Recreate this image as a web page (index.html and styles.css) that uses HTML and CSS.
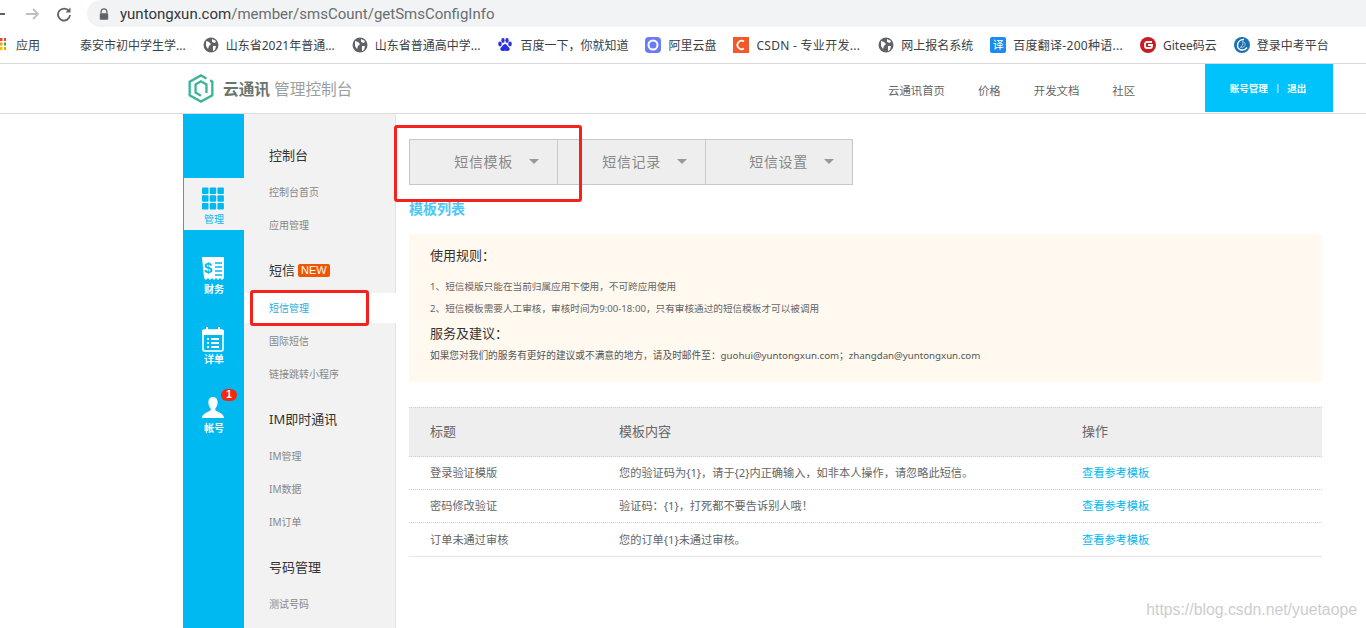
FILE: index.html
```html
<!DOCTYPE html>
<html lang="zh">
<head>
<meta charset="utf-8">
<title>云通讯 管理控制台</title>
<link rel="stylesheet" href="styles.css">
</head>
<body>
<div class="chrome">
  <div class="toolbar">
    <svg class="nav-icon back" viewBox="0 0 16 16"><path d="M14 8H2M7 3L2 8l5 5" fill="none" stroke="#5f6368" stroke-width="1.8"/></svg>
    <svg class="nav-icon fwd" viewBox="0 0 16 16"><path d="M2 8h12M9 3l5 5-5 5" fill="none" stroke="#bdc1c6" stroke-width="1.8"/></svg>
    <svg class="nav-icon reload" viewBox="0 0 16 16"><path d="M13 5.2A6 6 0 1 0 14 9" fill="none" stroke="#5f6368" stroke-width="1.8"/><path d="M14.5 1.5v5h-5z" fill="#5f6368"/></svg>
    <div class="omnibox">
      <svg class="lock" viewBox="0 0 12 14"><path d="M2.5 6V4.2a3.5 3.5 0 0 1 7 0V6" fill="none" stroke="#5f6368" stroke-width="1.5"/><rect x="1" y="6" width="10" height="8" rx="1" fill="#5f6368"/></svg>
      <span class="url"><span class="host">yuntongxun.com</span>/member/smsCount/getSmsConfigInfo</span>
    </div>
  </div>
  <div class="bookmarks">
    <div class="bm apps"><svg class="fav" viewBox="0 0 16 16"><rect x="10" y="1" width="2.500" height="3" fill="#ea4335"/><rect x="14" y="1" width="2.500" height="3" fill="#ea4335"/><rect x="10" y="5.500" width="2.500" height="3" fill="#f4a100"/><rect x="14" y="5.500" width="2.500" height="3" fill="#34a853"/><rect x="10" y="10" width="2.500" height="3" fill="#fbbc05"/><rect x="14" y="10" width="2.500" height="3" fill="#f4a100"/></svg><span>应用</span></div>
    <div class="bm first"><span>泰安市初中学生学...</span></div>
    <div class="bm"><svg class="fav" viewBox="0 0 16 16"><circle cx="8" cy="8" r="7.5" fill="#5f6368"/><path d="M3 4l3 1 2 2-2 2-1 3-2-3zM9 2l4 2-1 2-3-1zM10 9l3 0-1 4-2 1z" fill="#fff"/></svg><span>山东省2021年普通...</span></div>
    <div class="bm"><svg class="fav" viewBox="0 0 16 16"><circle cx="8" cy="8" r="7.5" fill="#5f6368"/><path d="M3 4l3 1 2 2-2 2-1 3-2-3zM9 2l4 2-1 2-3-1zM10 9l3 0-1 4-2 1z" fill="#fff"/></svg><span>山东省普通高中学...</span></div>
    <div class="bm"><svg class="fav" viewBox="0 0 16 16" fill="#2932e1"><ellipse cx="3" cy="7" rx="1.8" ry="2.4"/><ellipse cx="6" cy="3.5" rx="1.7" ry="2.4"/><ellipse cx="10" cy="3.5" rx="1.7" ry="2.4"/><ellipse cx="13" cy="7" rx="1.8" ry="2.4"/><path d="M8 7c-2 0-2.500 2.500-4 3.500-1.500 1.500-.5 4 2 3.500 1 0 3-.5 4 0 2.500.5 3.500-2 2-3.500C10.500 9.500 10 7 8 7z"/></svg><span>百度一下，你就知道</span></div>
    <div class="bm"><svg class="fav" viewBox="0 0 16 16"><rect width="16" height="16" rx="4" fill="#6a7bf5"/><circle cx="8" cy="8" r="4.500" fill="none" stroke="#fff" stroke-width="2"/></svg><span>阿里云盘</span></div>
    <div class="bm bm-csdn"><svg class="fav" viewBox="0 0 16 16"><rect width="16" height="16" fill="#f1592a"/><path d="M11 4.500A4.200 4.200 0 1 0 11 11.500" fill="none" stroke="#fff" stroke-width="1.800"/></svg><span class="wide">CSDN - 专业开发...</span></div>
    <div class="bm"><svg class="fav" viewBox="0 0 16 16"><circle cx="8" cy="8" r="7.5" fill="#5f6368"/><path d="M3 4l3 1 2 2-2 2-1 3-2-3zM9 2l4 2-1 2-3-1zM10 9l3 0-1 4-2 1z" fill="#fff"/></svg><span>网上报名系统</span></div>
    <div class="bm"><span class="fav fav-yi">译</span><span class="wide">百度翻译-200种语...</span></div>
    <div class="bm"><svg class="fav" viewBox="0 0 16 16"><circle cx="8" cy="8" r="8" fill="#c71d23"/><path d="M12 5H7a2 2 0 0 0-2 2v2a2 2 0 0 0 2 2h3a2 2 0 0 0 2-2V8H8" fill="none" stroke="#fff" stroke-width="1.800"/></svg><span>Gitee码云</span></div>
    <div class="bm"><svg class="fav" viewBox="0 0 16 16"><circle cx="8" cy="8" r="8" fill="#1a6fb0"/><path d="M10 2.500C6 2.500 3.500 5 3.500 8.500c0 2.500 2 4.500 5 4.500 2 0 3.500-1 4.500-2.500" fill="none" stroke="#fff" stroke-width="1.400"/><path d="M8.500 4.500c2.500.5 3.300 2.700 2.200 4.300-1 1.500-2.700 1.800-4.400 1.500 2-1 3.200-3 2.200-5.800z" fill="#1a6fb0" stroke="#fff" stroke-width=".6"/></svg><span>登录中考平台</span></div>
  </div>
</div>

<header class="site-head">
  <div class="brand">
    <svg class="logo" viewBox="0 0 28 32"><path d="M20 5 14 1.500 1.500 8.500v15L14 30.500l12.500-7v-15L24 7" fill="none" stroke="#3fb39b" stroke-width="2.600"/><path d="M14 24 8 20.500v-9L14 8l6 3.500V21" fill="none" stroke="#3fb39b" stroke-width="2.600"/></svg>
    <span class="brand-main">云通讯</span><span class="brand-sub">管理控制台</span>
  </div>
  <nav class="top-nav">
    <a>云通讯首页</a><a>价格</a><a>开发文档</a><a>社区</a>
  </nav>
  <div class="account"><span>账号管理</span><span class="sep">|</span><span>退出</span></div>
</header>

<main class="layout">
  <aside class="rail">
    <div class="rail-item active">
      <svg class="rail-icon" viewBox="0 0 22 22" fill="#00b9f1"><rect width="6.500" height="6.500" rx="1"/><rect x="7.700" width="6.500" height="6.500" rx="1"/><rect x="15.400" width="6.500" height="6.500" rx="1"/><rect y="7.700" width="6.500" height="6.500" rx="1"/><rect x="7.700" y="7.700" width="6.500" height="6.500" rx="1"/><rect x="15.400" y="7.700" width="6.500" height="6.500" rx="1"/><rect y="15.400" width="6.500" height="6.500" rx="1"/><rect x="7.700" y="15.400" width="6.500" height="6.500" rx="1"/><rect x="15.400" y="15.400" width="6.500" height="6.500" rx="1"/></svg>
      <span>管理</span>
    </div>
    <div class="rail-item">
      <svg class="rail-icon" viewBox="0 0 22 23"><path d="M0 0h22v21l-2 2-2-2-2 2-2-2-2 2-2-2-2 2-2-2-2 2-2-2z" fill="#fff"/><path d="M13 6h7M13 10h7M13 14h7M13 18h7" stroke="#00b9f1" stroke-width="1.500"/><text x="2" y="16" class="dollar">$</text></svg>
      <span>财务</span>
    </div>
    <div class="rail-item bill">
      <svg class="rail-icon tall" viewBox="0 0 22 25"><rect x="1" y="3" width="20" height="21" rx="2" fill="none" stroke="#cfeffb" stroke-width="2"/><rect y="3" width="22" height="5" fill="#fff"/><rect x="4" y="0" width="2" height="4" fill="#fff"/><rect x="16" y="0" width="2" height="4" fill="#fff"/><path d="M5 12h2M9 12h8M5 16h2M9 16h8M5 20h2M9 20h8" stroke="#fff" stroke-width="2"/></svg>
      <span>详单</span>
    </div>
    <div class="rail-item">
      <svg class="rail-icon" viewBox="0 0 24 23" fill="#fff"><path d="M12 0c3.500 0 5 2.500 5 6 0 3-1 5-2.500 6.500v2C17 16.500 24 18 24 23H0c0-5 7-6.500 9.500-8.500v-2C8 11 7 9 7 6c0-3.500 1.500-6 5-6z"/></svg>
      <span>帐号</span>
      <b class="badge">1</b>
    </div>
  </aside>

  <nav class="side-menu">
    <h3>控制台</h3>
    <a>控制台首页</a>
    <a>应用管理</a>
    <h3>短信<em class="new">NEW</em></h3>
    <a class="current">短信管理</a>
    <a>国际短信</a>
    <a>链接跳转小程序</a>
    <h3>IM即时通讯</h3>
    <a>IM管理</a>
    <a>IM数据</a>
    <a>IM订单</a>
    <h3>号码管理</h3>
    <a>测试号码</a>
  </nav>

  <section class="content">
    <div class="tabs">
      <div class="tab"><span>短信模板</span><i class="caret"></i></div>
      <div class="tab"><span>短信记录</span><i class="caret"></i></div>
      <div class="tab"><span>短信设置</span><i class="caret"></i></div>
    </div>
    <h2 class="list-title">模板列表</h2>
    <div class="notice">
      <h4>使用规则：</h4>
      <p class="rule first-rule">1、短信模版只能在当前归属应用下使用，不可跨应用使用</p>
      <p class="rule">2、短信模板需要人工审核，审核时间为9:00-18:00，只有审核通过的短信模板才可以被调用</p>
      <h4 class="second">服务及建议：</h4>
      <p class="rule mail">如果您对我们的服务有更好的建议或不满意的地方，请及时邮件至：guohui@yuntongxun.com；zhangdan@yuntongxun.com</p>
    </div>
    <div class="table">
      <div class="row head"><span>标题</span><span>模板内容</span><span>操作</span></div>
      <div class="row"><span>登录验证模版</span><span>您的验证码为{1}，请于{2}内正确输入，如非本人操作，请忽略此短信。</span><a>查看参考模板</a></div>
      <div class="row"><span>密码修改验证</span><span>验证码：{1}，打死都不要告诉别人哦！</span><a>查看参考模板</a></div>
      <div class="row last"><span>订单未通过审核</span><span>您的订单{1}未通过审核。</span><a>查看参考模板</a></div>
    </div>
  </section>
</main>

<div class="mark mark-tab"></div>
<div class="mark mark-menu"></div>
<div class="watermark">https://blog.csdn.net/yuetaope</div>
</body>
</html>
```

FILE: styles.css
```css
* { box-sizing: border-box; }
html, body { margin: 0; height: 628px; overflow: hidden; background: #fff; }
body { font-family: "Noto Sans", "Noto Sans CJK SC", sans-serif; color: #666; position: relative; }
h2, h3, h4, p { margin: 0; font-weight: normal; }

.chrome { height: 64px; border-bottom: 1px solid #d9d9d9; }
.toolbar { height: 27px; display: flex; align-items: center; }
.nav-icon { width: 16px; height: 16px; flex: none; }
.back { margin-left: -9px; }
.fwd { margin-left: 17px; }
.reload { margin-left: 16px; }
.omnibox { margin-left: 15px; flex: 1; height: 27px; background: #f1f3f4; border-radius: 14px 0 0 14px; display: flex; align-items: center; padding-left: 12px; }
.lock { width: 10px; height: 12px; flex: none; }
.url { margin-left: 11px; font: 15px "Roboto", "Liberation Sans", sans-serif; color: #6a6d70; }
.host { color: #33363a; }
.bookmarks { height: 36px; display: flex; align-items: center; font: 12px "Noto Sans", "Noto Sans CJK SC", sans-serif; color: #3c4043; white-space: nowrap; }
.bm { display: flex; align-items: center; gap: 7px; margin-right: 17px; }
.bm:last-child { margin-right: 0; }
.apps { margin-left: -10px; margin-right: 40px; gap: 10px; }
.bm-csdn { margin-right: 18px; }
.wide { letter-spacing: 0.280px; }
.fav { width: 16px; height: 16px; flex: none; }
.fav-yi { background: #1a8cf0; color: #fff; font-size: 11px; line-height: 16px; text-align: center; border-radius: 2px; }

.site-head { height: 50px; position: relative; display: flex; align-items: center; border-bottom: 1px solid #dcdcdc; padding-left: 188px; }
.brand { display: flex; align-items: center; width: 700px; }
.logo { width: 26px; height: 29px; margin-right: 9px; }
.brand-main { font-weight: 700; font-size: 15.700px; color: #6b7570; }
.brand-sub { font-size: 15.700px; color: #9a9fa0; margin-left: 4px; }
.top-nav { display: flex; gap: 33px; font-size: 11.400px; color: #666; padding-top: 2px; }
.top-nav a { display: block; }
.account { position: absolute; left: 1205px; top: 0; width: 128px; height: 48px; background: #00c3fb; color: #fff; font-weight: 700; font-size: 9.500px; display: flex; align-items: center; justify-content: center; padding: 0 2px 1px 0; }
.sep { margin: 0 7px; font-weight: 400; }

.layout { display: flex; height: 514px; margin-left: 183px; }
.rail { width: 61px; background: #00b9f1; padding-top: 64px; flex: none; }
.rail-item { height: 52px; margin-left: 1px; margin-bottom: 18px; padding: 9px 2px 0 0; display: flex; flex-direction: column; align-items: center; color: #fff; font-weight: 700; font-size: 10px; line-height: 12px; position: relative; }
.rail-item span { margin-left: 2px; }
.rail-item.active { background: #f2f2f2; color: #00b9f1; font-weight: 400; }
.rail-item.bill { margin-bottom: 17px; }
.rail-icon { width: 22px; height: 23px; margin-bottom: 3px; }
.rail-icon.tall { height: 25px; margin-bottom: 1px; }
.dollar { font: 700 15px "Liberation Sans", sans-serif; fill: #00b9f1; }
.badge { position: absolute; left: 37px; top: 2px; width: 16px; height: 12px; border-radius: 6px; background: #f4280f; color: #fff; font: 700 10px/12px "Liberation Sans", sans-serif; text-align: center; }

.side-menu { width: 152px; background: #f2f2f2; border-right: 1px solid #e3e3e3; flex: none; padding-top: 33px; }
.side-menu h3 { font-size: 13px; line-height: 17px; color: #333; padding-left: 25px; margin-bottom: 22px; display: flex; align-items: center; }
.side-menu a { display: block; font-size: 10px; line-height: 13px; color: #888; padding-left: 25px; margin-bottom: 20px; }
.side-menu a + h3 { margin-top: 30px; }
.new { margin-left: 3px; font: normal 11px/13px "Liberation Sans", sans-serif; background: #f25500; color: #fff; padding: 0 3px; border-radius: 2px; }
.side-menu a.current { background: #fff; color: #2aaee0; height: 30px; line-height: 30px; margin: -8px -1px 12px 0; }

.content { flex: 1; padding: 25px 44px 0 13px; }
.tabs { display: grid; grid-template-columns: 147px 148px 147px; width: 444px; height: 46px; background: #eee; border: 1px solid #c8c8c8; }
.tab { display: flex; align-items: center; justify-content: flex-end; gap: 16px; padding: 0 18px 2px 0; font-size: 14px; color: #888; letter-spacing: 0.700px; }
.tab + .tab { border-left: 1px solid #c8c8c8; }
.caret { border: 5px solid transparent; border-top: 5px solid #999; border-bottom: 0; width: 0; height: 0; }
.list-title { font-weight: 700; font-size: 14px; line-height: 18px; color: #4cc8f7; margin-top: 15px; }
.notice { margin-top: 16px; height: 148px; background: #fff9f0; padding: 11px 21px; color: #666; }
.notice h4 { font-size: 13px; line-height: 20px; color: #333; }
.notice .second { margin-top: 8px; }
.rule { font-size: 9.650px; line-height: 13px; margin-top: 9px; }
.first-rule { margin-top: 15px; }
.rule.mail { margin-top: 6px; color: #555; font-size: 9.700px; }
.table { margin-top: 25px; font-size: 11.200px; color: #666; }
.row { display: grid; grid-template-columns: 189px 463px 1fr; align-items: center; height: 33px; padding: 0 0 2px 21px; border-bottom: 1px dotted #ccc; }
.row.head { height: 50px; padding-bottom: 4px; background: #eee; border-top: 1px dotted #ccc; font-size: 13px; }
.row.last { height: 34px; border-bottom: 1px solid #e6e6e6; }
.row a { color: #00b9f1; }

.mark { position: absolute; border: 3px solid #f5221b; border-radius: 3px; }
.mark-tab { left: 394px; top: 125px; width: 188px; height: 77px; }
.mark-menu { left: 250px; top: 290px; width: 119px; height: 36px; }
.watermark { position: absolute; right: 9px; top: 601px; font: 15.800px "Liberation Sans", sans-serif; color: #cdcdcd; }
```
